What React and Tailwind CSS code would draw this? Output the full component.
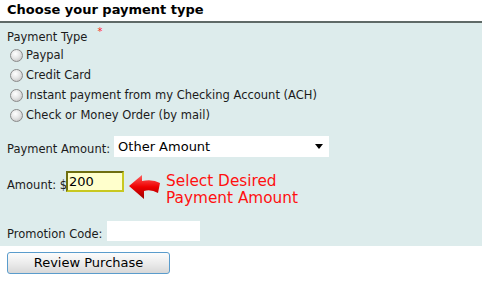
import React from 'react';

const Radio = ({ label }) => (
  <label className="flex items-center h-[20px]">
    <span className="ml-[3px] w-[13px] h-[13px] rounded-full border border-[#8a8a8a] bg-[radial-gradient(circle_at_40%_35%,#ffffff_0%,#e6e6e6_45%,#b9b9b9_100%)]" />
    <span className="ml-[3px]">{label}</span>
  </label>
);

const Arrow = () => (
  <svg width="32" height="26" viewBox="0 0 32 26">
    <defs>
      <linearGradient id="arrowFill" x1="0" y1="0" x2="0" y2="1">
        <stop offset="0" stopColor="#ff6060" />
        <stop offset="0.5" stopColor="#ee0000" />
        <stop offset="1" stopColor="#9c0000" />
      </linearGradient>
    </defs>
    <path
      d="M0 12 L13 1 L13 7 Q24 5 31 9 L29 19 Q22 15 15 17 L15 25 Z"
      fill="url(#arrowFill)"
    />
  </svg>
);

const App = () => {
  const paymentTypes = [
    'Paypal',
    'Credit Card',
    'Instant payment from my Checking Account (ACH)',
    'Check or Money Order (by mail)',
  ];

  return (
    <div className="w-[482px] h-[281px] bg-white text-[11.5px] leading-[14px] text-[#1b1b1b] font-['DejaVu_Sans',Verdana,sans-serif] overflow-hidden">
      <div className="h-[21px] pl-[7px] pt-[2px] text-[13px] leading-[16px] font-bold text-black">
        Choose your payment type
      </div>
      <div className="h-[2px] bg-[#5f6a67]" />

      <div className="h-[223px] bg-[#ddecec] pl-[7px] pt-[7px]">
        <div className="flex">
          <span>Payment Type</span>
          <span className="ml-[10px] -mt-[5px] text-[10px] text-[#ff2020]">*</span>
        </div>
        <div className="mt-[1px]">
          {paymentTypes.map((type) => (
            <Radio key={type} label={type} />
          ))}
        </div>

        <div className="flex items-center mt-[11px]">
          <span className="mt-[4px]">Payment Amount:</span>
          <div className="ml-[4px] w-[215px] h-[21px] bg-white flex items-center justify-between pl-[4px] pr-[6px] text-[13px] text-black">
            <span>Other Amount</span>
            <svg width="8" height="5" viewBox="0 0 8 5">
              <path d="M0 0 H8 L4 5 Z" fill="#000" />
            </svg>
          </div>
        </div>

        <div className="flex items-start mt-[14px]">
          <span className="mt-[7px]">Amount: $</span>
          <div className="-ml-[1px] w-[58px] h-[21px] border-2 border-t-[#6e6e10] border-l-[#6e6e10] border-b-[#c8c820] border-r-[#c8c820] bg-[#ffffcc] pl-[1px] text-[13px] leading-[17px] text-black">
            200
          </div>
          <div className="ml-[5px] mt-[3px]">
            <Arrow />
          </div>
          <div className="ml-[5px] mt-[2px] text-[15.3px] leading-[17px] text-[#ff1010]">
            <div>Select Desired</div>
            <div>Payment Amount</div>
          </div>
        </div>

        <div className="flex items-center mt-[13px]">
          <span className="mt-[7px]">Promotion Code:</span>
          <div className="ml-[5px] w-[93px] h-[20px] bg-white" />
        </div>
      </div>

      <div className="pl-[7px] pt-[6px]">
        <button className="w-[163px] h-[22px] rounded-[3px] border border-[#5a9ccc] bg-[linear-gradient(#fcfcfc,#ececec_50%,#d8d8d8)] text-[13px] leading-[16px] text-black font-['DejaVu_Sans',Verdana,sans-serif]">
          Review Purchase
        </button>
      </div>
    </div>
  );
};

export default App;
